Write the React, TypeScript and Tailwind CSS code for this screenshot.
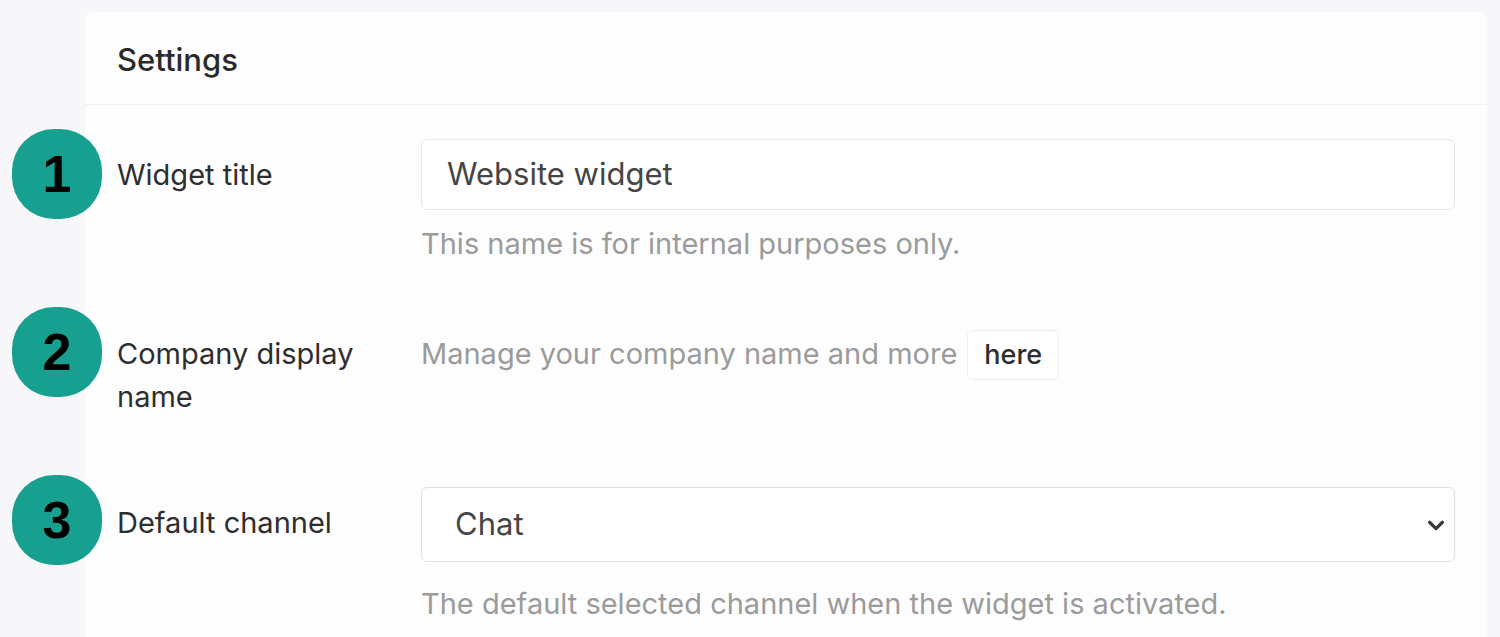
import React from "react";

// Widget settings panel, with numbered callouts over the left edge

const font = { fontFamily: "Inter, 'Noto Sans', sans-serif" };
const badgeFont = { fontFamily: "'Liberation Sans', Arial, sans-serif" };

function Badge({ n, top }: { n: number; top: string }) {
  return (
    <div
      style={badgeFont}
      className={`absolute left-[12px] ${top} flex h-[90px] w-[90px] items-center justify-center rounded-[42px] bg-[#17a08f] text-[52px] font-bold leading-none text-black`}
    >
      {n}
    </div>
  );
}

export default function App() {
  return (
    <div
      style={font}
      className="relative h-[637px] overflow-hidden bg-[#f7f7fa] pl-[85px] pr-[13px] pt-[12px]"
    >
      <div className="h-full rounded-t-lg bg-[#fdfdfe]">
        <div className="flex h-[93px] items-center border-b border-[#f0eff3] px-[32px] pt-[4px] text-[31px] font-medium text-[#2a2a2a]">
          Settings
        </div>

        <div className="grid grid-cols-[304px_1fr] pl-[32px] pr-[32px] pt-[34px] text-[29px]">
          {/* widget title */}
          <div className="pt-[14px] leading-[43px] text-[#2e2e2e]">Widget title</div>
          <div>
            <div className="flex h-[71px] items-center rounded-md border border-[#e6e5e9] bg-white px-[25px] text-[31px] text-[#454545]">
              Website widget
            </div>
            <div className="mt-[16px] leading-[36px] text-[#9b9b9b]">
              This name is for internal purposes only.
            </div>
          </div>

          {/* company name */}
          <div className="mt-[70px] w-[250px] leading-[43px] text-[#2e2e2e]">
            Company display name
          </div>
          <div className="mt-[70px] flex items-start gap-[10px]">
            <span className="leading-[43px] text-[#9b9b9b]">Manage your company name and more</span>
            <button className="-mt-[2px] h-[50px] rounded-md border border-[#efeef2] bg-white px-[16px] text-[27px] font-medium text-[#2e2e2e]">
              here
            </button>
          </div>

          {/* default channel */}
          <div className="mt-[69px] pt-[14px] leading-[43px] text-[#2e2e2e]">Default channel</div>
          <div className="mt-[69px]">
            <div className="flex h-[75px] items-center justify-between rounded-md border border-[#dfdee3] bg-white pl-[33px] pr-[7px] text-[31px] text-[#454545]">
              <span>Chat</span>
              <svg width="22" height="22" viewBox="0 0 24 24" fill="none" stroke="#3a3a3a" strokeWidth="3.5" strokeLinecap="round" strokeLinejoin="round">
                <path d="M5 9l7 7 7-7" />
              </svg>
            </div>
            <div className="mt-[24px] leading-[36px] text-[#9b9b9b]">
              The default selected channel when the widget is activated.
            </div>
          </div>
        </div>
      </div>

      <Badge n={1} top="top-[129px]" />
      <Badge n={2} top="top-[307px]" />
      <Badge n={3} top="top-[475px]" />
    </div>
  );
}
